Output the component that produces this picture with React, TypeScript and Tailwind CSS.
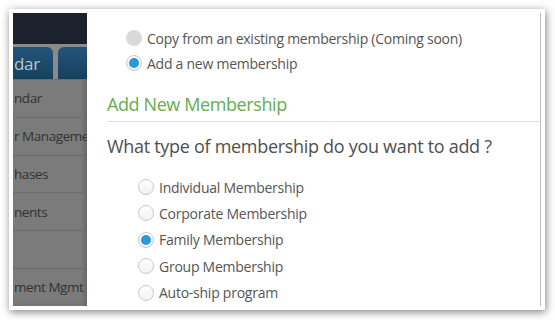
import React from 'react';

const font = { fontFamily: '"Open Sans", "Liberation Sans", sans-serif' };

function Radio({ state }: { state: 'off' | 'on' | 'disabled' }) {
  if (state === 'disabled') {
    return <span className="block w-4 h-4 rounded-full bg-[#d9d9d9] shrink-0" />;
  }
  return (
    <span className="flex items-center justify-center w-4 h-4 rounded-full border border-[#c9c9c9] bg-gradient-to-b from-white to-[#f1f1f1] shrink-0">
      {state === 'on' && <span className="block w-[10px] h-[10px] rounded-full bg-[#2a9ad6]" />}
    </span>
  );
}

const sideItems = ['ndar', 'r Manageme', 'hases', 'nents', '', 'ment Mgmt'];

const types: { label: string; on?: boolean }[] = [
  { label: 'Individual Membership' },
  { label: 'Corporate Membership' },
  { label: 'Family Membership', on: true },
  { label: 'Group Membership' },
  { label: 'Auto-ship program' },
];

export default function App() {
  return (
    <div className="w-[555px] h-[320px] bg-white pl-[9px] pt-[9px]" style={font}>
      <div className="w-[536px] h-[301px] border-4 border-white bg-white shadow-[1px_2px_8px_rgba(0,0,0,0.5)]">
        <div className="flex h-full overflow-hidden border-r border-[#bdbdbd]">
          {/* dimmed sidebar */}
          <div className="w-[74px] shrink-0 flex flex-col bg-[#7b7b7b] shadow-[inset_-3px_0_4px_rgba(0,0,0,0.15)]">
            <div className="h-[32px] bg-[#1b222e]" />
            <div className="h-[35px] bg-[#8a8a8a] pt-[3px] flex gap-[5px] overflow-hidden">
              <div className="w-[40px] h-[32px] shrink-0 rounded-tr-[6px] bg-gradient-to-b from-[#235579] to-[#17405f] flex items-center pl-[1px] text-[17px] tracking-[-0.3px] text-[#b9c6d2]">
                dar
              </div>
              <div className="w-[40px] h-[32px] shrink-0 rounded-tl-[6px] bg-gradient-to-b from-[#235579] to-[#17405f]" />
            </div>
            {sideItems.map((t, i) => (
              <div
                key={i}
                className="h-[38.5px] flex items-center pl-[1px] text-[13.5px] tracking-[-0.45px] text-[#333] whitespace-nowrap overflow-hidden border-t border-[#6d6d6d] first:border-t-0"
              >
                {t}
              </div>
            ))}
          </div>

          {/* main panel */}
          <div className="flex-1 flex flex-col text-[#555] tracking-[-0.25px]">
            <div className="pl-[39px] pt-[17px] flex flex-col gap-[9px]">
              <div className="flex items-center gap-[5px] h-[16px]">
                <Radio state="disabled" />
                <span className="text-[14px]">Copy from an existing membership (Coming soon)</span>
              </div>
              <div className="flex items-center gap-[5px] h-[16px]">
                <Radio state="on" />
                <span className="text-[14px]">Add a new membership</span>
              </div>
            </div>
            <div className="ml-[20px] mt-[17px] h-[34px] flex items-center border-b border-[#e2e2dc] text-[18px] tracking-[-0.4px] text-[#65ad4e]">
              Add New Membership
            </div>
            <div className="ml-[20px] mt-[11px] text-[18px] leading-[26px] tracking-[-0.3px] text-[#4f4f4f]">
              What type of membership do you want to add ?
            </div>
            <div className="pl-[51px] mt-[20px] flex flex-col gap-[10.4px]">
              {types.map((t) => (
                <div key={t.label} className="flex items-center gap-[5px] h-[16px]">
                  <Radio state={t.on ? 'on' : 'off'} />
                  <span className="text-[14px]">{t.label}</span>
                </div>
              ))}
            </div>
          </div>
        </div>
      </div>
    </div>
  );
}
